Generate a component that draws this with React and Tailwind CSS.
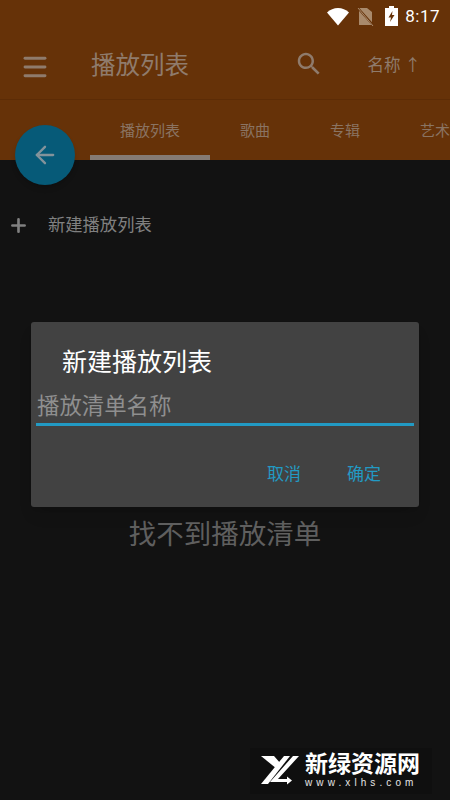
import React from "react";
import { Menu, ArrowLeft, Plus } from "lucide-react";

const cjk = "font-['Roboto','Noto_Sans_CJK_SC',sans-serif]";

function StatusIcons() {
  return (
    <div className="flex items-center h-[32px] pr-[10px] justify-end">
      {/* wifi */}
      <svg width="24" height="20" viewBox="0 0 24 20" className="mr-[6px]">
        <path d="M1 6.500C4 3.500 8 2 12 2s8 1.500 11 4.500L12 19.500z" fill="#ffffff" />
      </svg>
      {/* no sim */}
      <svg width="18" height="20" viewBox="0 0 18 20" className="mr-[11px]">
        <path d="M3 2h8l5 4v13H3z" fill="#a98a6c" />
        <path d="M1 1l16 18" stroke="#663208" strokeWidth="2" />
        <path d="M2 2l15 18" stroke="#a98a6c" strokeWidth="1" />
      </svg>
      {/* battery charging */}
      <svg width="13" height="20" viewBox="0 0 13 20" className="mr-[7px]">
        <path d="M4 0h5v2h4v18H0V2h4z" fill="#ffffff" />
        <path d="M7.500 5L3.500 11.500h2.500L5 16l4.500-7H7z" fill="#663208" />
      </svg>
      <span className="text-white text-[17px] font-['Roboto',sans-serif] tracking-[0.5px] leading-none">8:17</span>
    </div>
  );
}

function Toolbar() {
  return (
    <div className="flex items-center h-[68px] pt-[2px] border-b border-[#5c2c06]">
      <Menu size={30} strokeWidth={2.300} className="ml-[20px] text-[#8f7b6c]" />
      <span className="ml-[41px] text-[24.500px] text-[#8f7b6c] leading-none">播放列表</span>
      {/* search */}
      <svg width="30" height="30" viewBox="0 0 24 24" fill="#8f7b6c" className="ml-auto mb-[6px]">
        <path d="M15.500 14h-.79l-.28-.27C15.410 12.590 16 11.110 16 9.500 16 5.910 13.090 3 9.500 3S3 5.910 3 9.500 5.910 16 9.500 16c1.610 0 3.090-.59 4.230-1.570l.27.28v.79l5 4.990L20.490 19l-4.990-5zm-6 0C7.010 14 5 11.990 5 9.500S7.010 5 9.500 5 14 7.010 14 9.500 11.990 14 9.500 14z" />
      </svg>
      <span className="ml-[43px] mr-[29px] text-[16.500px] text-[#8f7b6c] whitespace-nowrap leading-none">名称 ↑</span>
    </div>
  );
}

function Tabs() {
  return (
    <div className="flex h-[60px] pl-[90px] overflow-hidden">
      <div className="flex items-center shrink-0 px-[30px] pt-[7px] border-b-[5px] border-[#857b74] text-[#8a7463] text-[15px]">播放列表</div>
      <div className="flex items-center shrink-0 px-[30px] pt-[2px] text-[#8a7463] text-[15px]">歌曲</div>
      <div className="flex items-center shrink-0 px-[30px] pt-[2px] text-[#8a7463] text-[15px]">专辑</div>
      <div className="flex items-center shrink-0 px-[30px] pt-[2px] text-[#8a7463] text-[15px]">艺术家</div>
    </div>
  );
}

function Dialog() {
  return (
    <div className="absolute left-[31px] top-[322px] w-[388px] h-[185px] bg-[#424242] rounded-[3px] shadow-lg">
      <div className="pl-[31px] pt-[26px] text-[25px] leading-[30px] text-white">新建播放列表</div>
      <div className="mx-[5px] mt-[12px] border-b-[3px] border-[#229ac4] pl-[1px] text-[22.400px] leading-[33px] text-[#8f8f8f]">播放清单名称</div>
      <div className="flex justify-end gap-[46px] pr-[38px] mt-[36px] text-[17px] leading-[24px] text-[#229ac4]">
        <span>取消</span>
        <span>确定</span>
      </div>
    </div>
  );
}

function Watermark() {
  return (
    <div className="absolute left-[250px] top-[748px] w-[182px] h-[46px] bg-[#0f0f0f] flex items-center">
      <svg width="45" height="40" viewBox="0 0 45 40" className="ml-[5px] shrink-0">
        <path d="M6 5h13l7 8-4 5z" fill="#ffffff" />
        <path d="M29 5h6L13 33H6z" fill="#ffffff" />
        <path d="M38 5h6L23 28h9v-2.500l5 4-5 4V31H15z" fill="#ffffff" />
      </svg>
      <div className="ml-[5px] flex flex-col">
        <span className="text-[23px] leading-[24px] font-bold text-white whitespace-nowrap">新绿资源网</span>
        <span className="text-[10px] leading-[12px] tracking-[4.100px] text-[#e6e6e6] whitespace-nowrap font-['Liberation_Sans',sans-serif]">www.xlhs.com</span>
      </div>
    </div>
  );
}

export default function App() {
  return (
    <div className={`relative w-[450px] h-[800px] overflow-hidden bg-[#121212] flex flex-col ${cjk}`}>
      <header className="bg-[#663208]">
        <StatusIcons />
        <Toolbar />
        <Tabs />
      </header>

      {/* list */}
      <div className="flex items-center h-[44px] mt-[43px] pl-[8px] text-[#808080]">
        <Plus size={21} strokeWidth={3} />
        <span className="ml-[19px] pt-[2px] text-[17.300px] leading-none">新建播放列表</span>
      </div>

      <div className="mt-[270px] text-center text-[27.500px] leading-[36px] text-[#5f5f5f]">找不到播放清单</div>

      {/* back fab */}
      <div className="absolute left-[15px] top-[125px] w-[60px] h-[60px] rounded-full bg-[#065a78] flex items-center justify-center shadow-md">
        <ArrowLeft size={28} strokeWidth={2} className="text-[#83939b]" />
      </div>

      <Dialog />
      <Watermark />
    </div>
  );
}
